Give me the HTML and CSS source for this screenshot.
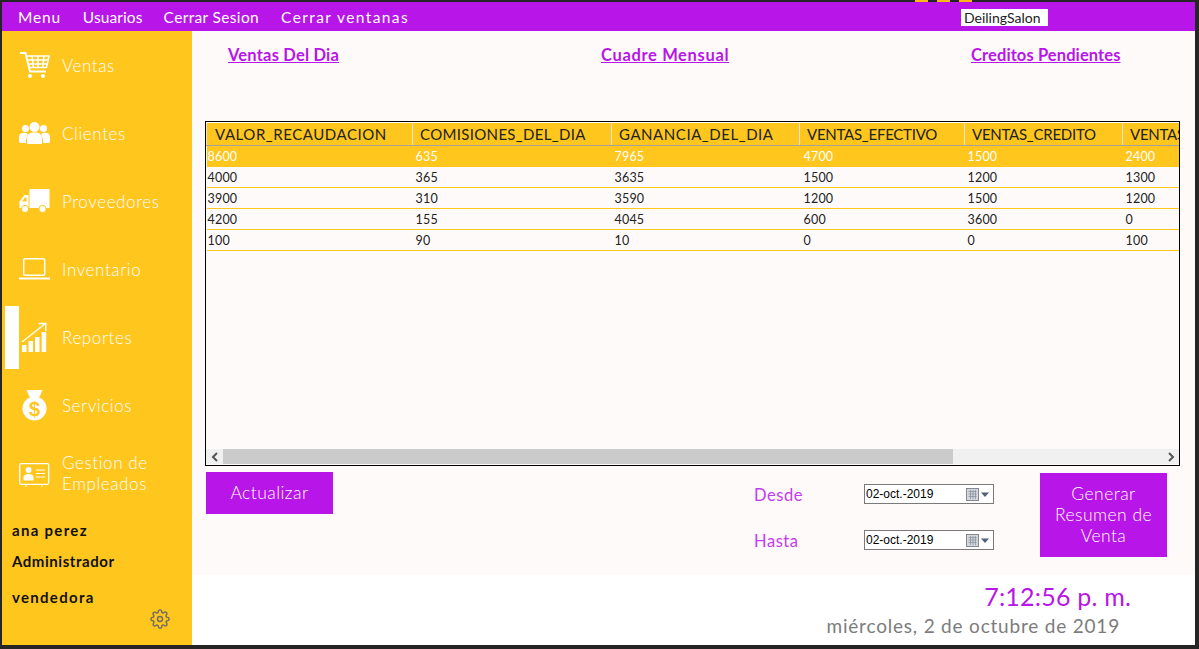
FILE: index.html
```html
<html>
<head>
    <title>DeilingSalon</title>
    <meta charset="utf-8">
    <link rel="stylesheet" href="styles.css">
</head>

<body>

    <div id="behind">
        <span class="spot"></span>
        <span class="spot"></span>
        <span class="spot"></span>
    </div>

    <div id="window">

        <div id="menubar">
            <span class="menu-item">Menu</span>
            <span class="menu-item">Usuarios</span>
            <span class="menu-item">Cerrar Sesion</span>
            <span class="menu-item">Cerrar ventanas</span>
            <span id="salon">DeilingSalon</span>
        </div>

        <div id="content">

            <div id="sidebar">
                <div class="nav-item">
                    <svg class="nav-icon" viewBox="0 0 32 32">
                        <path class="line" stroke-width="2" d="M1 4H6.5L11 22.5H27"/>
                        <path class="line" stroke-width="1.6" d="M7.5 7H30L27.5 18.5H10.2M8.4 11H29M9.3 15H28M13 7L14.5 18.5M19 7V18.5M25 7L23.8 18.5"/>
                        <circle class="fill" cx="11" cy="27" r="2"/>
                        <circle class="fill" cx="24" cy="27" r="2"/>
                    </svg>
                    <span class="nav-text">Ventas</span>
                </div>
                <div class="nav-item">
                    <svg class="nav-icon" viewBox="0 0 32 32">
                        <circle class="fill" cx="6.5" cy="11.5" r="3.5"/>
                        <circle class="fill" cx="24.5" cy="11.5" r="3.5"/>
                        <path class="fill" d="M0 25V20C0 17 2 16 6 15.5L9 17C8 19 7 21 7 26H1Z"/>
                        <path class="fill" d="M31 25V20C31 17 29 16 25 15.5L22 17C23 19 24 21 24 26H30Z"/>
                        <circle class="fill" cx="15.5" cy="10" r="5"/>
                        <path class="fill" d="M8 27V21C8 18 10 16.5 13 15.5H18C21 16.5 23 18 23 21V27Z"/>
                    </svg>
                    <span class="nav-text">Clientes</span>
                </div>
                <div class="nav-item">
                    <svg class="nav-icon" viewBox="0 0 32 32">
                        <rect class="fill" x="10.5" y="4" width="20" height="19"/>
                        <path class="fill" d="M9.5 10H5.5L0.5 16.5V23H9.5Z"/>
                        <path class="hole" d="M7.5 12.5H6L3 16.5H7.5Z"/>
                        <circle class="fill ring" cx="6" cy="24" r="3.6"/>
                        <circle class="fill ring" cx="23.5" cy="24" r="3.6"/>
                    </svg>
                    <span class="nav-text">Proveedores</span>
                </div>
                <div class="nav-item">
                    <svg class="nav-icon" viewBox="0 0 32 32">
                        <rect class="line" stroke-width="1.4" x="4.7" y="5.7" width="21" height="16.6" rx="1.5"/>
                        <path class="line" stroke-width="2" d="M0 25.5H31"/>
                    </svg>
                    <span class="nav-text">Inventario</span>
                </div>
                <div class="nav-item selected">
                    <div id="marker"></div>
                    <svg class="nav-icon" viewBox="0 0 32 32">
                        <rect class="fill" x="3" y="24" width="4.5" height="7"/>
                        <rect class="fill" x="9.5" y="20" width="4.5" height="11"/>
                        <rect class="fill" x="16" y="16" width="4.5" height="15"/>
                        <rect class="fill" x="22.7" y="11" width="4.5" height="20"/>
                        <path class="line" stroke-width="1.4" d="M3 21L26.5 2.5M19.5 2.5H26.8V10"/>
                    </svg>
                    <span class="nav-text">Reportes</span>
                </div>
                <div class="nav-item">
                    <svg class="nav-icon" viewBox="0 0 32 32">
                        <path class="fill" d="M7.5 1H23.5L20.5 8H10.5Z"/>
                        <circle class="fill" cx="15.5" cy="19.5" r="12"/>
                        <text class="bag-sign" x="15.5" y="26.5">$</text>
                    </svg>
                    <span class="nav-text">Servicios</span>
                </div>
                <div class="nav-item">
                    <svg class="nav-icon" viewBox="0 0 32 32">
                        <rect class="line" stroke-width="1.3" x="0.7" y="6.7" width="29" height="20.6" rx="1.5"/>
                        <circle class="fill" cx="9.5" cy="13" r="3"/>
                        <path class="fill" d="M4.5 23.5V20C4.5 18 7 17 9.5 17S14.5 18 14.5 20V23.5Z"/>
                        <path class="line" stroke-width="1" d="M17 13H26M17 16.5H26M17 20H26M7 27.5V30M23 27.5V30"/>
                    </svg>
                    <span class="nav-text">Gestion de Empleados</span>
                </div>

                <div id="user">
                    <p class="user-name">ana perez</p>
                    <p class="user-role">Administrador</p>
                    <p class="user-job">vendedora</p>
                </div>
                <svg id="gear" viewBox="0 0 24 24">
                    <circle cx="12" cy="12" r="3"/>
                    <path d="M19.4 15a1.65 1.65 0 0 0 .33 1.82l.06.06a2 2 0 0 1 0 2.83 2 2 0 0 1-2.83 0l-.06-.06a1.65 1.65 0 0 0-1.82-.33 1.65 1.65 0 0 0-1 1.51V21a2 2 0 0 1-2 2 2 2 0 0 1-2-2v-.09A1.65 1.65 0 0 0 9 19.4a1.65 1.65 0 0 0-1.82.33l-.06.06a2 2 0 0 1-2.83 0 2 2 0 0 1 0-2.83l.06-.06a1.65 1.65 0 0 0 .33-1.82 1.65 1.65 0 0 0-1.51-1H3a2 2 0 0 1-2-2 2 2 0 0 1 2-2h.09A1.65 1.65 0 0 0 4.6 9a1.65 1.65 0 0 0-.33-1.82l-.06-.06a2 2 0 0 1 0-2.83 2 2 0 0 1 2.83 0l.06.06a1.65 1.65 0 0 0 1.82.33H9a1.65 1.65 0 0 0 1-1.51V3a2 2 0 0 1 2-2 2 2 0 0 1 2 2v.09a1.65 1.65 0 0 0 1 1.51 1.65 1.65 0 0 0 1.82-.33l.06-.06a2 2 0 0 1 2.83 0 2 2 0 0 1 0 2.83l-.06.06a1.65 1.65 0 0 0-.33 1.82V9a1.65 1.65 0 0 0 1.51 1H21a2 2 0 0 1 2 2 2 2 0 0 1-2 2h-.09a1.65 1.65 0 0 0-1.51 1z"/>
                </svg>
            </div>

            <div id="main">
                <div id="panel">
                    <div id="links">
                        <a class="report-link">Ventas Del Dia</a>
                        <a class="report-link">Cuadre Mensual</a>
                        <a class="report-link">Creditos Pendientes</a>
                    </div>

                    <div id="gridview">
                        <div id="gridscroll">
                            <table id="grid">
                                <colgroup>
                                    <col class="c1"><col class="c2"><col class="c3"><col class="c4"><col class="c5"><col class="c6">
                                </colgroup>
                                <thead>
                                    <tr>
                                        <th>VALOR_RECAUDACION</th>
                                        <th>COMISIONES_DEL_DIA</th>
                                        <th>GANANCIA_DEL_DIA</th>
                                        <th>VENTAS_EFECTIVO</th>
                                        <th>VENTAS_CREDITO</th>
                                        <th>VENTAS</th>
                                    </tr>
                                </thead>
                                <tbody>
                                    <tr class="row-on"><td>8600</td><td>635</td><td>7965</td><td>4700</td><td>1500</td><td>2400</td></tr>
                                    <tr><td>4000</td><td>365</td><td>3635</td><td>1500</td><td>1200</td><td>1300</td></tr>
                                    <tr><td>3900</td><td>310</td><td>3590</td><td>1200</td><td>1500</td><td>1200</td></tr>
                                    <tr><td>4200</td><td>155</td><td>4045</td><td>600</td><td>3600</td><td>0</td></tr>
                                    <tr><td>100</td><td>90</td><td>10</td><td>0</td><td>0</td><td>100</td></tr>
                                </tbody>
                            </table>
                        </div>
                        <div id="scrollbar">
                            <div class="scroll-btn">
                                <svg viewBox="0 0 10 10"><path d="M7 1L3 5L7 9"/></svg>
                            </div>
                            <div id="thumb"></div>
                            <div id="track"></div>
                            <div class="scroll-btn">
                                <svg viewBox="0 0 10 10"><path d="M3 1L7 5L3 9"/></svg>
                            </div>
                        </div>
                    </div>

                    <div id="controls">
                        <button id="refresh" class="action">Actualizar</button>
                        <div id="dates">
                            <span class="date-label">Desde</span>
                            <div class="date-box">
                                <span class="date-value">02-oct.-2019</span>
                                <svg class="date-icon" viewBox="0 0 23 15">
                                    <rect x="0.5" y="1.5" width="12" height="12" fill="#d3d7de" stroke="#85878c"/>
                                    <path d="M2.5 4.5H10.5M2.5 7H10.5M2.5 9.5H10.5M4.5 3V12M7 3V12M9.5 3V12" stroke="#8d93a0" stroke-width="0.8"/>
                                    <path d="M15 5.5H23L19 10Z" fill="#4f5f7c"/>
                                </svg>
                            </div>
                            <span class="date-label">Hasta</span>
                            <div class="date-box">
                                <span class="date-value">02-oct.-2019</span>
                                <svg class="date-icon" viewBox="0 0 23 15">
                                    <rect x="0.5" y="1.5" width="12" height="12" fill="#d3d7de" stroke="#85878c"/>
                                    <path d="M2.5 4.5H10.5M2.5 7H10.5M2.5 9.5H10.5M4.5 3V12M7 3V12M9.5 3V12" stroke="#8d93a0" stroke-width="0.8"/>
                                    <path d="M15 5.5H23L19 10Z" fill="#4f5f7c"/>
                                </svg>
                            </div>
                        </div>
                        <button id="summary" class="action">Generar Resumen de Venta</button>
                    </div>
                </div>

                <div id="clock">
                    <p id="time">7:12:56 p. m.</p>
                    <p id="today">miércoles, 2 de octubre de 2019</p>
                </div>
            </div>

        </div>
    </div>

</body>
</html>
```

FILE: styles.css
```css
body {
    margin: 0;
    padding: 2px 4px 4px 2px;
    height: 649px;
    box-sizing: border-box;
    overflow: hidden;
    background-color: #252526;
    font-family: "Lato", "Liberation Sans", sans-serif;
}

p {
    margin: 0;
}

/* what shows of the desktop above the window */
#behind {
    position: absolute;
    left: 915px;
    top: 0;
    display: flex;
    gap: 9px;
}

.spot {
    width: 13px;
    height: 2px;
    background-color: #fdb813;
}

#window {
    height: 643px;
    display: flex;
    flex-direction: column;
    background-color: #fff;
}

#menubar {
    height: 29px;
    flex: none;
    display: flex;
    align-items: center;
    gap: 22px;
    padding-left: 16px;
    background-color: #b815e8;
    color: #fff;
    font-size: 15.5px;
}

.menu-item:nth-child(1) { letter-spacing: 0.8px; }
.menu-item:nth-child(2) { letter-spacing: 0.1px; }
.menu-item:nth-child(3) { letter-spacing: 0.35px; margin-left: -1px; }
.menu-item:nth-child(4) { letter-spacing: 1.4px; }

#salon {
    margin-left: auto;
    margin-right: 147px;
    margin-top: 2px;
    width: 87px;
    height: 17px;
    line-height: 17px;
    box-sizing: border-box;
    padding-left: 3px;
    background-color: #fff;
    color: #222;
    font-size: 14px;
}

#content {
    flex: 1;
    display: flex;
    min-height: 0;
}

#sidebar {
    width: 190px;
    flex: none;
    display: flex;
    flex-direction: column;
    box-sizing: border-box;
    background-color: #ffc61e;
}

.nav-item {
    position: relative;
    height: 68px;
    flex: none;
    display: flex;
    align-items: center;
    gap: 12px;
    padding-left: 17px;
    box-sizing: border-box;
}

.nav-icon {
    width: 32px;
    height: 32px;
    flex: none;
    margin-right: -1px;
}

.nav-text {
    width: 110px;
    color: #fff;
    font-size: 17px;
    line-height: 21px;
    letter-spacing: 0.6px;
    font-weight: 300;
}

.fill {
    fill: #fff;
}

.ring {
    stroke: #ffc61e;
    stroke-width: 1;
}

.hole {
    fill: #ffc61e;
}

.line {
    fill: none;
    stroke: #fff;
}

.bag-sign {
    fill: #ffc61e;
    font-family: "Liberation Sans", sans-serif;
    font-size: 20px;
    font-weight: 700;
    text-anchor: middle;
}

#marker {
    position: absolute;
    left: 3px;
    top: 3px;
    width: 14px;
    height: 63px;
    background-color: #fff;
}

#user {
    padding-left: 10px;
    margin-top: 13px;
    color: #111;
    font-size: 15px;
    font-weight: 700;
    line-height: 20px;
}

.user-name {
    letter-spacing: 1.3px;
}

.user-role {
    margin-top: 11px;
    letter-spacing: 0.55px;
}

.user-job {
    margin-top: 16px;
    letter-spacing: 1.3px;
}

#gear {
    width: 20px;
    height: 20px;
    align-self: flex-end;
    margin-right: 22px;
    margin-top: 2px;
    fill: none;
    stroke: #6f6c62;
    stroke-width: 1.7;
}

#main {
    flex: 1;
    display: flex;
    flex-direction: column;
    min-width: 0;
}

#panel {
    height: 544px;
    flex: none;
    padding-top: 14px;
    box-sizing: border-box;
    background-color: #fffafa;
}

#links {
    display: grid;
    grid-template-columns: 373px 370px auto;
    padding-left: 36px;
    height: 76px;
}

.report-link {
    color: #b815e8;
    font-size: 16.5px;
    font-weight: 700;
    line-height: 21px;
    text-decoration: underline;
}

.report-link:nth-child(1) { letter-spacing: 0.2px; }
.report-link:nth-child(2) { letter-spacing: 0.65px; }
.report-link:nth-child(3) { letter-spacing: 0.1px; }

#gridview {
    margin-left: 13px;
    width: 975px;
    height: 345px;
    box-sizing: border-box;
    border: 1px solid #000;
    display: flex;
    flex-direction: column;
}

#gridscroll {
    flex: 1;
    overflow: hidden;
    min-height: 0;
}

#grid {
    width: 1100px;
    table-layout: fixed;
    border-collapse: collapse;
    margin-top: 1px;
    font-size: 12.5px;
    color: #222;
}

.c1 { width: 206px; }
.c2 { width: 199px; }
.c3 { width: 188px; }
.c4 { width: 165px; }
.c5 { width: 158px; }
.c6 { width: 184px; }

#grid th {
    height: 22px;
    padding: 0 0 0 7px;
    box-sizing: border-box;
    background-color: #ffc61e;
    border-left: 1px solid #e9e4d8;
    border-bottom: 1px solid #a8a29a;
    color: #222;
    font-size: 15px;
    font-weight: 400;
    letter-spacing: 0.55px;
    text-align: left;
    white-space: nowrap;
    overflow: hidden;
}

#grid th:nth-child(1) { padding-left: 8px; }
#grid th:nth-child(2) { letter-spacing: 0.33px; }
#grid th:nth-child(4),
#grid th:nth-child(5),
#grid th:nth-child(6) { letter-spacing: -0.25px; }

#grid td {
    height: 21px;
    padding: 2px 0 0 3px;
    box-sizing: border-box;
    border-bottom: 1px solid #ffc61e;
    letter-spacing: 0.2px;
}

#grid td:first-child {
    padding-left: 1px;
}

#grid td:nth-child(4) {
    padding-left: 4px;
}

#grid .row-on td {
    background-color: #ffc61e;
    color: #fff;
}

#scrollbar {
    height: 15px;
    flex: none;
    display: flex;
    margin-bottom: 1px;
    background-color: #f0f0f0;
}

.scroll-btn {
    width: 17px;
    flex: none;
    display: flex;
    align-items: center;
    justify-content: center;
}

.scroll-btn svg {
    width: 10px;
    height: 10px;
    fill: none;
    stroke: #555;
    stroke-width: 2;
}

#thumb {
    width: 730px;
    flex: none;
    background-color: #cbcbcb;
}

#track {
    flex: 1;
}

#controls {
    display: flex;
    align-items: flex-start;
    padding: 6px 0 0 14px;
}

.action {
    width: 127px;
    border: none;
    padding: 0 0 2px;
    background-color: #b815e8;
    color: #fff;
    font-family: inherit;
    font-size: 17.5px;
    line-height: 21px;
    letter-spacing: 0.45px;
    font-weight: 300;
}

#refresh {
    height: 42px;
}

#dates {
    display: grid;
    grid-template-columns: 110px 130px;
    grid-auto-rows: 20px;
    row-gap: 26px;
    align-items: center;
    margin-left: 421px;
    margin-top: 12px;
}

.date-label {
    padding-top: 2px;
    color: #c23cf0;
    font-size: 16.5px;
    letter-spacing: 0.55px;
}

.date-box {
    height: 20px;
    display: flex;
    align-items: center;
    justify-content: space-between;
    padding: 0 4px 0 1px;
    box-sizing: border-box;
    border: 1px solid #7a7a7a;
    background-color: #fff;
}

.date-value {
    font-family: "Liberation Sans", sans-serif;
    font-size: 12px;
    color: #000;
}

.date-icon {
    width: 23px;
    height: 15px;
}

#summary {
    height: 84px;
    margin-left: 46px;
    margin-top: 1px;
    padding: 0 10px 2px;
}

#clock {
    flex: 1;
    display: flex;
    flex-direction: column;
    align-items: flex-end;
    padding: 5px 0 0;
}

#time {
    margin-right: 64px;
    color: #b815e8;
    font-size: 25px;
    line-height: 32px;
    letter-spacing: 0.2px;
}

#today {
    margin-top: 2px;
    margin-right: 75px;
    color: #7c7c7c;
    font-size: 19px;
    line-height: 24px;
    letter-spacing: 0.8px;
}
```
